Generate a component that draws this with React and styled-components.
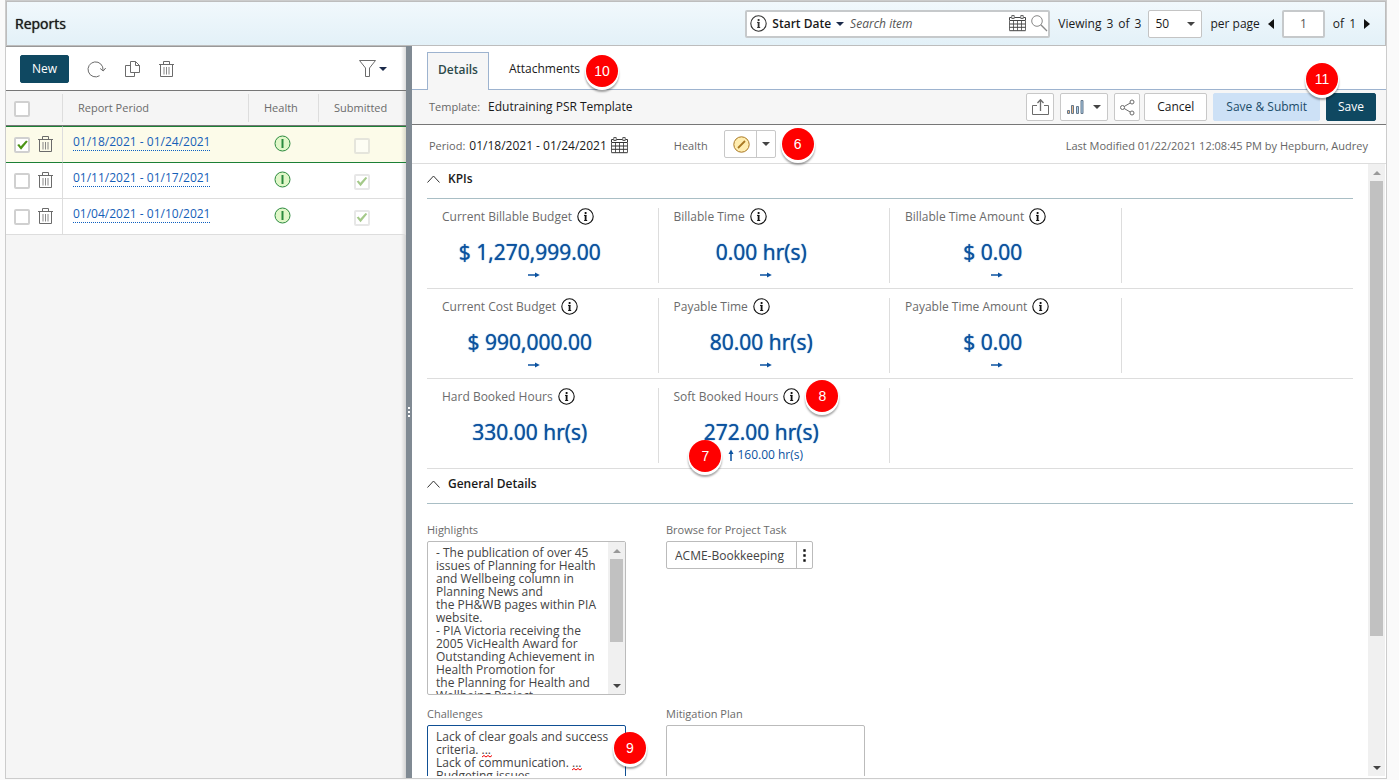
import React from "react";
import styled, { createGlobalStyle, css } from "styled-components";

const GlobalStyle = createGlobalStyle`
  *, *::before, *::after { box-sizing: border-box; }
  body {
    margin: 0;
    background: #fafafa;
    color: #1a1a1a;
    font: 12px/16px "Open Sans", "Noto Sans", sans-serif;
  }
  button, input, select, textarea { font: inherit; color: inherit; margin: 0; }
  button { cursor: pointer; }
`;

/* ---------- shell ---------- */

const Shell = styled.div`
  display: flex;
  flex-direction: column;
  height: calc(100vh - 1px);
  margin: 0 12px 0 5px;
  border: 1px solid #ccc;
  background: #fff;
`;

const Header = styled.header`
  display: flex;
  align-items: center;
  flex: none;
  height: 45px;
  padding: 0 15px 0 8px;
  border: 1px solid #bdbdbd;
  background: linear-gradient(#f1f8fc, #e3f1f8);
`;

const Title = styled.h1`
  flex: 1;
  margin: 0;
  font-size: 14px;
  font-weight: 500;
  text-shadow: 0 0 1px currentColor;
`;

const Body = styled.div`
  display: flex;
  flex: 1;
  min-height: 0;
`;

/* ---------- small shared parts ---------- */

const Icon = styled.svg`
  display: block;
  flex: none;
  fill: none;
  stroke: ${(p) => p.$color || "#6b6b6b"};
  stroke-width: 1;
`;

const Caret = styled.span`
  flex: none;
  width: 0;
  height: 0;
  pointer-events: none;
  border: 4px solid transparent;
  border-bottom-width: 0;
  border-top-color: ${(p) => p.$color || "#444"};
`;

const Badge = styled.span`
  position: absolute;
  z-index: 2;
  left: ${(p) => p.$left};
  top: ${(p) => p.$top};
  display: flex;
  align-items: center;
  justify-content: center;
  width: 32px;
  height: 32px;
  border-radius: 50%;
  background: #f00;
  box-shadow: 0 2px 0 1px #fff, 0 4px 2px 1px rgba(0, 0, 0, 0.35);
  color: #fff;
  font: 14px/16px "Liberation Sans", Arial, sans-serif;
`;

const Anchor = styled.span`
  position: relative;
  display: inline-flex;
  align-items: center;
`;

const Checkbox = styled.input.attrs({ type: "checkbox" })`
  appearance: none;
  flex: none;
  display: grid;
  place-items: center;
  width: 16px;
  height: 16px;
  border: 2px solid #d0d0d0;
  border-radius: 2px;
  background: #fff;
  opacity: ${(p) => (p.disabled ? 0.5 : 1)};
  &:checked::before {
    content: "";
    width: 12px;
    height: 10px;
    background: #4b9416;
    clip-path: polygon(10% 50%, 26% 40%, 40% 62%, 84% 6%, 98% 16%, 42% 98%);
  }
`;

const IconButton = styled.button`
  display: flex;
  align-items: center;
  gap: ${(p) => p.$gap || "0"};
  padding: 0;
  border: 0;
  background: none;
`;

const Button = styled.button`
  display: flex;
  align-items: center;
  justify-content: center;
  height: 28px;
  padding: 0 12px;
  border: 1px solid #c8c8c8;
  border-radius: 2px;
  background: #fff;
  white-space: nowrap;
  ${(p) =>
    p.$kind === "primary" &&
    css`
      padding: 0 11px;
      border-color: #0f4861;
      background: #0f4861;
      color: #fff;
      font-weight: 500;
    `}
  ${(p) =>
    p.$kind === "soft" &&
    css`
      border-color: #cde1f6;
      background: #cde1f6;
      color: #1c4c69;
    `}
`;

const ToolButton = styled(Button)`
  width: ${(p) => p.$width};
  padding: 0;
  gap: 9px;
`;

/* ---------- header controls ---------- */

const SearchBox = styled.div`
  display: flex;
  align-items: center;
  width: 305px;
  height: 28px;
  padding: 0 0 0 3px;
  border: 2px solid #c6c9cb;
  border-radius: 2px;
  background: #fff;
`;

const FieldPicker = styled(IconButton)`
  margin: 0 6px 0 5px;
  font-weight: 600;
`;

const SearchInput = styled.input`
  flex: 1;
  min-width: 0;
  padding: 0;
  border: 0;
  outline: 0;
  background: none;
  font-style: italic;
  &::placeholder { color: #555; opacity: 1; }
`;

const SearchButton = styled(IconButton)`
  margin-left: 5px;
`;

const PagerText = styled.span`
  display: flex;
  gap: 5px;
  margin: ${(p) => p.$margin || "0"};
  white-space: nowrap;
  strong { font-weight: 500; }
`;

const SelectWrap = styled.span`
  display: grid;
  align-items: center;
  width: 54px;
  > * { grid-area: 1 / 1; }
  > span { justify-self: end; margin-right: 7px; }
`;

const Select = styled.select`
  appearance: none;
  width: 100%;
  height: 28px;
  padding: 0 6px;
  border: 1px solid #c4c4c4;
  border-radius: 2px;
  background: #fff;
`;

const PageInput = styled.input`
  width: 43px;
  height: 28px;
  padding: 0;
  border: 2px solid #c6c9cb;
  border-radius: 2px;
  background: #fff;
  color: #555;
  text-align: center;
`;

const PageArrow = styled(IconButton)`
  &::before {
    content: "";
    border: 5px solid transparent;
    ${(p) =>
      p.$dir === "left"
        ? "border-left-width: 0; border-right: 6px solid #111;"
        : "border-right-width: 0; border-left: 6px solid #111;"}
  }
`;

/* ---------- left list ---------- */

const ListPane = styled.aside`
  flex: none;
  width: 400px;
  border-top: 1px solid #999;
  background: linear-gradient(to left, rgba(0, 0, 0, 0.14), rgba(0, 0, 0, 0) 5px), #f5f5f5;
`;

const ListToolbar = styled.div`
  display: flex;
  align-items: center;
  height: 44px;
  padding: 0 19px 0 14px;
  border-bottom: 1px solid #777;
  background: linear-gradient(to left, rgba(0, 0, 0, 0.14), rgba(0, 0, 0, 0) 5px), #fff;
`;

const ListActions = styled.div`
  display: flex;
  align-items: center;
  flex: 1;
  gap: 19px;
  margin-left: 18px;
  padding-top: 2px;
`;

const Table = styled.table`
  width: 100%;
  table-layout: fixed;
  border-collapse: separate;
  border-spacing: 0;
`;

const Th = styled.th`
  width: ${(p) => p.$width};
  height: 35px;
  padding: ${(p) => (p.$check ? "2px 0 0 8px" : "0 0 0 15px")};
  border-bottom: 1px solid #777;
  background: ${(p) =>
    p.$last ? "none" : "linear-gradient(#ddd, #ddd) right center / 1px 28px no-repeat"};
  color: #6b6b6b;
  font-size: 11px;
  font-weight: 400;
  text-align: left;
`;

const Row = styled.tr`
  > td {
    height: 36px;
    padding: 0;
    border-bottom: 1px solid #ddd;
    background-color: #fff;
  }
  > td:first-child { border-right: 1px solid #ddd; }
  > td:last-child {
    background-image: linear-gradient(to left, rgba(0, 0, 0, 0.14), rgba(0, 0, 0, 0) 5px);
  }
  ${(p) =>
    p.$selected &&
    css`
      > td {
        height: 37px;
        border-top: 1px solid #1c8036;
        border-bottom-color: #1c8036;
        background-color: #fcfbe9;
      }
    `}
`;

const RowTools = styled.div`
  display: flex;
  align-items: center;
  gap: 8px;
  padding: 1px 0 0 8px;
  > button { padding-bottom: 2px; }
`;

const PeriodLink = styled.a`
  display: inline-block;
  margin: 0 0 6px 10px;
  border-bottom: 1px dotted #0b5fc0;
  color: #1660b8;
  line-height: 17px;
  text-decoration: none;
`;

const Centered = styled.div`
  display: flex;
  justify-content: center;
  padding: ${(p) => p.$pad || "0"};
`;

const Splitter = styled.div`
  display: flex;
  align-items: center;
  justify-content: center;
  flex: none;
  width: 6px;
  background: #808a93;
`;

/* ---------- detail pane ---------- */

const Detail = styled.main`
  display: flex;
  flex-direction: column;
  flex: 1;
  min-width: 0;
`;

const Tabs = styled.nav`
  display: flex;
  align-items: flex-end;
  flex: none;
  height: 44px;
  padding-left: 15px;
  border-bottom: 1px solid #9db3cf;
`;

const Tab = styled.button`
  position: relative;
  height: 38px;
  margin-bottom: -1px;
  padding: 0 10px 4px;
  border: 1px solid transparent;
  border-bottom: 0;
  background: none;
  ${(p) =>
    p.$active
      ? css`
          border-color: #9db3cf;
          background: #f6f6f6;
          color: #2d4a4a;
          font-weight: 600;
        `
      : css`
          margin-left: 9px;
          padding-bottom: 6px;
        `}
`;

const TemplateBar = styled.div`
  display: flex;
  align-items: center;
  flex: none;
  height: 35px;
  padding: 0 10px 0 17px;
  border-bottom: 1px solid #777;
  background: #f6f6f6;
`;

const Spacer = styled.div`
  flex: 1;
`;

const Muted = styled.span`
  color: #666;
  font-size: 11px;
  white-space: nowrap;
`;

const Value = styled.span`
  margin-left: ${(p) => p.$gap};
  white-space: nowrap;
`;

const Actions = styled.div`
  display: flex;
  gap: 6px;
  > :nth-child(3) { margin-right: -2px; }
`;

const PeriodBar = styled.div`
  display: flex;
  align-items: center;
  flex: none;
  height: 39px;
  padding: 3px 18px 0 17px;
  border-bottom: 1px solid #ddd;
`;

const DateButton = styled(IconButton)`
  margin-left: 4px;
`;

const HealthGroup = styled.div`
  position: relative;
  display: flex;
  align-items: center;
  gap: 16px;
  margin-left: 46px;
`;

const HealthButton = styled(Button)`
  width: 52px;
  margin-bottom: 3px;
  padding: 0;
  > :first-child { margin: 0 6px 0 8px; }
  > :last-child { margin: 0 auto; }
`;

const Rule = styled.span`
  align-self: stretch;
  width: 1px;
  background: #c8c8c8;
`;

const ScrollArea = styled.div`
  display: flex;
  flex: 1;
  min-height: 0;
  margin: 0 1px 2px 0;
`;

const Content = styled.div`
  flex: 1;
  min-width: 0;
  padding: 0 15px;
  overflow: auto;
  scrollbar-width: none;
`;

const ScrollTrack = styled.div`
  display: flex;
  flex-direction: column;
  align-items: center;
  flex: none;
  width: 17px;
  padding: 7px 0 6px;
  background: #f0f0f0;
`;

const ScrollThumb = styled.div`
  width: 13px;
  height: ${(p) => p.$size};
  margin: 6px 0 auto;
  background: #c1c1c1;
`;

const UpCaret = styled(Caret)`
  transform: rotate(180deg);
`;

const SectionHead = styled.button`
  display: flex;
  align-items: center;
  gap: 8px;
  width: 100%;
  height: 35px;
  padding: 0 0 4px;
  border: 0;
  border-bottom: 1px solid #a9bec5;
  background: none;
  font-weight: 600;
`;

const KpiRow = styled.div`
  display: grid;
  grid-template-columns: repeat(4, 1fr);
  height: 90px;
  padding: 9px 0 5px;
  border-bottom: 1px solid #ddd;
`;

const Kpi = styled.div`
  position: relative;
  padding-left: 15px;
  border-right: 1px solid #ddd;
`;

const KpiLabel = styled.div`
  position: relative;
  display: inline-flex;
  align-items: center;
  gap: 5px;
  height: 17px;
  color: #6b6b6b;
  white-space: nowrap;
`;

const KpiValue = styled.div`
  margin: 13px 40px 1px 0;
  color: #0b52a0;
  font-size: 21px;
  font-weight: 500;
  line-height: 28px;
  text-align: center;
  text-shadow: 0 0 1px currentColor;
  white-space: nowrap;
`;

const KpiDelta = styled.div`
  display: flex;
  align-items: center;
  justify-content: center;
  gap: 3px;
  height: 16px;
  margin-right: 31px;
  color: #0b52a0;
`;

const FieldGrid = styled.div`
  display: grid;
  grid-template-columns: 199px 199px;
  gap: 11px 40px;
  padding-top: 18px;
`;

const Field = styled.div`
  position: relative;
  display: flex;
  flex-direction: column;
  align-items: stretch;
`;

const FieldLabel = styled.label`
  height: 19px;
  color: #6b6b6b;
  font-size: 11px;
`;

const TextBox = styled.div`
  display: flex;
  height: 154px;
  border: 1px solid ${(p) => (p.$focused ? "#0f4f94" : "#bbb")};
  border-radius: 2px;
  background: #fff;
`;

const TextArea = styled.textarea`
  flex: 1;
  min-width: 0;
  padding: 4px 0 0 8px;
  border: 0;
  outline: 0;
  background: none;
  color: #444;
  line-height: 13px;
  resize: none;
  overflow: auto;
  scrollbar-width: none;
`;

const Squiggle = styled.svg`
  position: absolute;
  left: ${(p) => p.$left};
  top: ${(p) => p.$top};
  fill: none;
  stroke: #e00;
`;

const Combo = styled.div`
  display: flex;
  width: 147px;
  height: 28px;
  border: 1px solid #bbb;
  border-radius: 2px;
  background: #fff;
`;

const ComboInput = styled.input`
  flex: 1;
  min-width: 0;
  padding: 1px 8px 0;
  border: 0;
  border-right: 1px solid #bbb;
  outline: 0;
  background: none;
  color: #444;
`;

const ComboMore = styled(IconButton)`
  justify-content: center;
  width: 15px;
`;

/* ---------- icons ---------- */

const InfoIcon = ({ color = "#111" }) => (
  <Icon $color={color} width="17" height="17" viewBox="0 0 17 17">
    <circle cx="8.5" cy="8.5" r="7.700" strokeWidth="1.100" />
    <path d="M7 7.400h2.300M7.200 12.500h3" />
    <path d="M8.600 7v5.800M8.600 4v2" strokeWidth="1.800" />
  </Icon>
);

const CalendarIcon = ({ color = "#333" }) => (
  <Icon $color={color} width="17" height="17" viewBox="0 0 17 17">
    <path d="M.5 5V2.500h2M5.500 2.500h6M14.500 2.500h2V5M.5 5.500h16M.5 9h16M.5 12.300h16M.5 15.700h16" />
    <path d="M2.800.5h2.400v3H2.800zM11.800.5h2.400v3h-2.400z" strokeWidth=".8" />
    <path d="M.5 5.500v10M4.500 5.500v10M8.500 5.500v10M12.500 5.500v10M16.500 5.500v10" strokeWidth=".8" />
  </Icon>
);

const SearchIcon = () => (
  <Icon $color="#888" width="17" height="17" viewBox="0 0 17 17">
    <circle cx="6" cy="6" r="5.300" />
    <path d="M9.800 9.800L16 16" strokeWidth="1.300" />
  </Icon>
);

const RefreshIcon = () => (
  <Icon width="19" height="18" viewBox="0 0 19 18">
    <path d="M12.600 14.700A7.500 7.500 0 1 1 16 9.200M13.200 7.500l3 2.500 2.500-3" />
  </Icon>
);

const CopyIcon = () => (
  <Icon width="15" height="17" viewBox="0 0 15 17">
    <path d="M5.500.5h5l4 4v7h-9zM10.500.5v4h4M5.500 4.500h-5v11h9v-4" />
  </Icon>
);

const TrashIcon = () => (
  <Icon width="15" height="17" viewBox="0 0 15 17">
    <path d="M0 3.500h15M4.500 3.500v-3h6v3M1.500 3.500v12h12v-12" />
    <path d="M5 6v7.500M7.500 6v7.500M10 6v7.500" strokeWidth=".8" />
  </Icon>
);

const FilterIcon = () => (
  <Icon width="17" height="17" viewBox="0 0 17 17">
    <path d="M.5.5h16L10.500 8v8.500h-4V8z" />
  </Icon>
);

const GoodIcon = () => (
  <Icon $color="#2b8a3e" width="17" height="17" viewBox="0 0 17 17">
    <circle cx="8.500" cy="8.500" r="7.500" fill="#e0f7c8" />
    <path d="M8.500 4v9" strokeWidth="2" />
  </Icon>
);

const WarnIcon = () => (
  <Icon $color="#a87722" width="17" height="17" viewBox="0 0 17 17">
    <circle cx="8.500" cy="8.500" r="7.700" fill="#ffedb0" />
    <path d="M5 12l7-7" strokeWidth="1.800" />
  </Icon>
);

const ExportIcon = () => (
  <Icon width="17" height="17" viewBox="0 0 17 17">
    <path d="M5 6.500H.5v9h16v-9H12" />
    <path d="M8.500 12V1M5.500 4l3-3.300 3 3.300" strokeWidth="1.300" />
  </Icon>
);

const ChartIcon = () => (
  <Icon $color="#66788a" width="17" height="14" viewBox="0 0 17 14">
    <path d="M.5 10.500h2v3h-2z" fill="#e9b98c" />
    <path d="M4.500 5.500h2v8h-2z" fill="#e9b98c" />
    <path d="M9.500 6.500h2v7h-2z" fill="#a9cdea" />
    <path d="M14 .5h2v13h-2z" fill="#a9cdea" />
  </Icon>
);

const ShareIcon = () => (
  <Icon width="15" height="17" viewBox="0 0 15 17">
    <circle cx="2.500" cy="8.500" r="2" />
    <circle cx="12" cy="3" r="2" />
    <circle cx="12" cy="14" r="2" />
    <path d="M4.200 7.500l6-3.500M4.200 9.500l6 3.500" />
  </Icon>
);

const ChevronIcon = () => (
  <Icon $color="#333" width="13" height="8" viewBox="0 0 13 8">
    <path d="M.5 7.500l6-6.500 6 6.500" />
  </Icon>
);

const FlatIcon = () => (
  <Icon $color="#0b52a0" width="12" height="6" viewBox="0 0 12 6">
    <path d="M0 3h8" strokeWidth="1.500" />
    <path d="M7 .5L11.800 3 7 5.500z" fill="#0b52a0" stroke="none" />
  </Icon>
);

const UpIcon = () => (
  <Icon $color="#0b52a0" width="6" height="12" viewBox="0 0 6 12">
    <path d="M3 12V4" strokeWidth="1.500" />
    <path d="M.5 5L3 .5 5.500 5z" fill="#0b52a0" stroke="none" />
  </Icon>
);

const GripIcon = () => (
  <Icon width="2" height="10" viewBox="0 0 2 10">
    <path d="M0 0h2v2H0zM0 4h2v2H0zM0 8h2v2H0z" fill="#fff" stroke="none" />
  </Icon>
);

const MoreIcon = () => (
  <Icon width="3" height="13" viewBox="0 0 3 13">
    <path
      d="M.3.300h2.400v2.400H.3zM.3 5.300h2.400v2.400H.3zM.3 10.300h2.400v2.400H.3z"
      fill="#111"
      stroke="none"
    />
  </Icon>
);

/* ---------- data ---------- */

const reports = [
  { period: "01/18/2021 - 01/24/2021", selected: true, submitted: false },
  { period: "01/11/2021 - 01/17/2021", selected: false, submitted: true },
  { period: "01/04/2021 - 01/10/2021", selected: false, submitted: true },
];

const kpis = [
  [
    { label: "Current Billable Budget", value: "$ 1,270,999.00", trend: "flat" },
    { label: "Billable Time", value: "0.00 hr(s)", trend: "flat" },
    { label: "Billable Time Amount", value: "$ 0.00", trend: "flat" },
  ],
  [
    { label: "Current Cost Budget", value: "$ 990,000.00", trend: "flat" },
    { label: "Payable Time", value: "80.00 hr(s)", trend: "flat" },
    { label: "Payable Time Amount", value: "$ 0.00", trend: "flat" },
  ],
  [
    { label: "Hard Booked Hours", value: "330.00 hr(s)" },
    {
      label: "Soft Booked Hours",
      value: "272.00 hr(s)",
      trend: "up",
      delta: "160.00 hr(s)",
      labelBadge: "8",
      deltaBadge: "7",
    },
  ],
];

const highlights = `- The publication of over 45 issues of Planning for Health and Wellbeing column in Planning News and
the PH&WB pages within PIA website.
- PIA Victoria receiving the 2005 VicHealth Award for Outstanding Achievement in Health Promotion for
the Planning for Health and Wellbeing Project.`;

const challenges = `Lack of clear goals and success criteria. ...
Lack of communication. ...
Budgeting issues.`;

/* ---------- sections ---------- */

const TopBar = () => (
  <Header>
    <Title>Reports</Title>
    <SearchBox>
      <InfoIcon color="#333" />
      <FieldPicker $gap="5px">
        Start Date <Caret $color="#1b2a4a" />
      </FieldPicker>
      <SearchInput aria-label="Search item" placeholder="Search item" />
      <IconButton aria-label="Pick date"><CalendarIcon color="#444" /></IconButton>
      <SearchButton aria-label="Search"><SearchIcon /></SearchButton>
    </SearchBox>
    <PagerText $margin="0 7px 0 8px">
      <span>Viewing</span>
      <strong>3</strong>
      <span>of</span>
      <strong>3</strong>
    </PagerText>
    <SelectWrap>
      <Select aria-label="Items per page" defaultValue="50">
        <option>50</option>
      </Select>
      <Caret />
    </SelectWrap>
    <PagerText $margin="0 8px">per page</PagerText>
    <PageArrow $dir="left" aria-label="Previous page" />
    <PagerText $margin="0 8px">
      <PageInput aria-label="Page" defaultValue="1" />
    </PagerText>
    <PagerText $margin="0 8px 0 0">
      <span>of</span>
      <span>1</span>
    </PagerText>
    <PageArrow $dir="right" aria-label="Next page" />
  </Header>
);

const ReportList = () => (
  <ListPane>
    <ListToolbar>
      <Button $kind="primary">New</Button>
      <ListActions>
        <IconButton aria-label="Refresh"><RefreshIcon /></IconButton>
        <IconButton aria-label="Copy"><CopyIcon /></IconButton>
        <IconButton aria-label="Delete"><TrashIcon /></IconButton>
      </ListActions>
      <IconButton $gap="3px" aria-label="Filter">
        <FilterIcon />
        <Caret $color="#1b2a4a" />
      </IconButton>
    </ListToolbar>
    <Table>
      <thead>
        <tr>
          <Th $width="57px" $check><Checkbox aria-label="Select all" /></Th>
          <Th>Report Period</Th>
          <Th $width="70px">Health</Th>
          <Th $width="87px" $last>Submitted</Th>
        </tr>
      </thead>
      <tbody>
        {reports.map((r) => (
          <Row key={r.period} $selected={r.selected}>
            <td>
              <RowTools>
                <Checkbox aria-label={`Select ${r.period}`} defaultChecked={r.selected} />
                <IconButton aria-label={`Delete ${r.period}`}><TrashIcon /></IconButton>
              </RowTools>
            </td>
            <td><PeriodLink href="#report">{r.period}</PeriodLink></td>
            <td><Centered $pad="0 3px 2px 0"><GoodIcon /></Centered></td>
            <td>
              <Centered $pad="2px 2px 0 0">
                <Checkbox aria-label="Submitted" disabled defaultChecked={r.submitted} />
              </Centered>
            </td>
          </Row>
        ))}
      </tbody>
    </Table>
  </ListPane>
);

const KpiCell = ({ item }) => (
  <Kpi>
    <KpiLabel>
      {item.label} <InfoIcon />
      {item.labelBadge && <Badge $left="calc(100% + 6px)" $top="-8px">{item.labelBadge}</Badge>}
    </KpiLabel>
    <KpiValue>{item.value}</KpiValue>
    {item.trend && (
      <KpiDelta>
        <Anchor>
          {item.trend === "up" ? <UpIcon /> : <FlatIcon />}
          {item.deltaBadge && <Badge $left="-39px" $top="-9px">{item.deltaBadge}</Badge>}
        </Anchor>
        {item.delta}
      </KpiDelta>
    )}
  </Kpi>
);

const Scrollbar = ({ thumb }) => (
  <ScrollTrack aria-hidden="true">
    <UpCaret $color="#999" />
    <ScrollThumb $size={thumb} />
    <Caret $color="#444" />
  </ScrollTrack>
);

const SpellMark = ({ left, top }) => (
  <Squiggle $left={left} $top={top} width="10" height="3">
    <path d="M0 2l2-1.500 2 1.500 2-1.500 2 1.500 2-1.500" />
  </Squiggle>
);

const ReportDetail = () => (
  <Detail>
    <Tabs>
      <Tab $active>Details</Tab>
      <Tab>
        Attachments
        <Badge $left="calc(100% - 4px)" $top="2px">10</Badge>
      </Tab>
    </Tabs>
    <TemplateBar>
      <Muted>Template:</Muted>
      <Value $gap="8px">Edutraining PSR Template</Value>
      <Spacer />
      <Actions>
        <ToolButton $width="28px" aria-label="Export"><ExportIcon /></ToolButton>
        <ToolButton $width="48px" aria-label="Charts"><ChartIcon /><Caret /></ToolButton>
        <ToolButton $width="26px" aria-label="Share"><ShareIcon /></ToolButton>
        <Button>Cancel</Button>
        <Button $kind="soft">Save &amp; Submit</Button>
        <Anchor>
          <Button $kind="primary">Save</Button>
          <Badge $left="-20px" $top="-30px">11</Badge>
        </Anchor>
      </Actions>
    </TemplateBar>
    <PeriodBar>
      <Muted>Period:</Muted>
      <Value $gap="4px">01/18/2021 - 01/24/2021</Value>
      <DateButton aria-label="Pick period"><CalendarIcon /></DateButton>
      <HealthGroup>
        <Muted>Health</Muted>
        <HealthButton aria-label="Health">
          <WarnIcon />
          <Rule />
          <Caret />
        </HealthButton>
        <Badge $left="calc(100% + 6px)" $top="-2px">6</Badge>
      </HealthGroup>
      <Spacer />
      <Muted>Last Modified 01/22/2021 12:08:45 PM by Hepburn, Audrey</Muted>
    </PeriodBar>
    <ScrollArea>
      <Content>
        <SectionHead><ChevronIcon />KPIs</SectionHead>
        {kpis.map((row, i) => (
          <KpiRow key={i}>
            {row.map((item) => <KpiCell key={item.label} item={item} />)}
          </KpiRow>
        ))}
        <SectionHead><ChevronIcon />General Details</SectionHead>
        <FieldGrid>
          <Field>
            <FieldLabel htmlFor="highlights">Highlights</FieldLabel>
            <TextBox>
              <TextArea id="highlights" defaultValue={highlights} />
              <Scrollbar thumb="83px" />
            </TextBox>
          </Field>
          <Field>
            <FieldLabel htmlFor="task">Browse for Project Task</FieldLabel>
            <Combo>
              <ComboInput id="task" defaultValue="ACME-Bookkeeping" />
              <ComboMore aria-label="Browse"><MoreIcon /></ComboMore>
            </Combo>
          </Field>
          <Field>
            <FieldLabel htmlFor="challenges">Challenges</FieldLabel>
            <TextBox $focused>
              <TextArea id="challenges" spellCheck={false} defaultValue={challenges} />
            </TextBox>
            <SpellMark left="55px" top="49px" />
            <SpellMark left="145px" top="62px" />
            <Badge $left="calc(100% - 12px)" $top="26px">9</Badge>
          </Field>
          <Field>
            <FieldLabel htmlFor="mitigation">Mitigation Plan</FieldLabel>
            <TextBox>
              <TextArea id="mitigation" />
            </TextBox>
          </Field>
        </FieldGrid>
      </Content>
      <Scrollbar thumb="455px" />
    </ScrollArea>
  </Detail>
);

export default function App() {
  return (
    <>
      <GlobalStyle />
      <Shell>
        <TopBar />
        <Body>
          <ReportList />
          <Splitter aria-hidden="true"><GripIcon /></Splitter>
          <ReportDetail />
        </Body>
      </Shell>
    </>
  );
}
